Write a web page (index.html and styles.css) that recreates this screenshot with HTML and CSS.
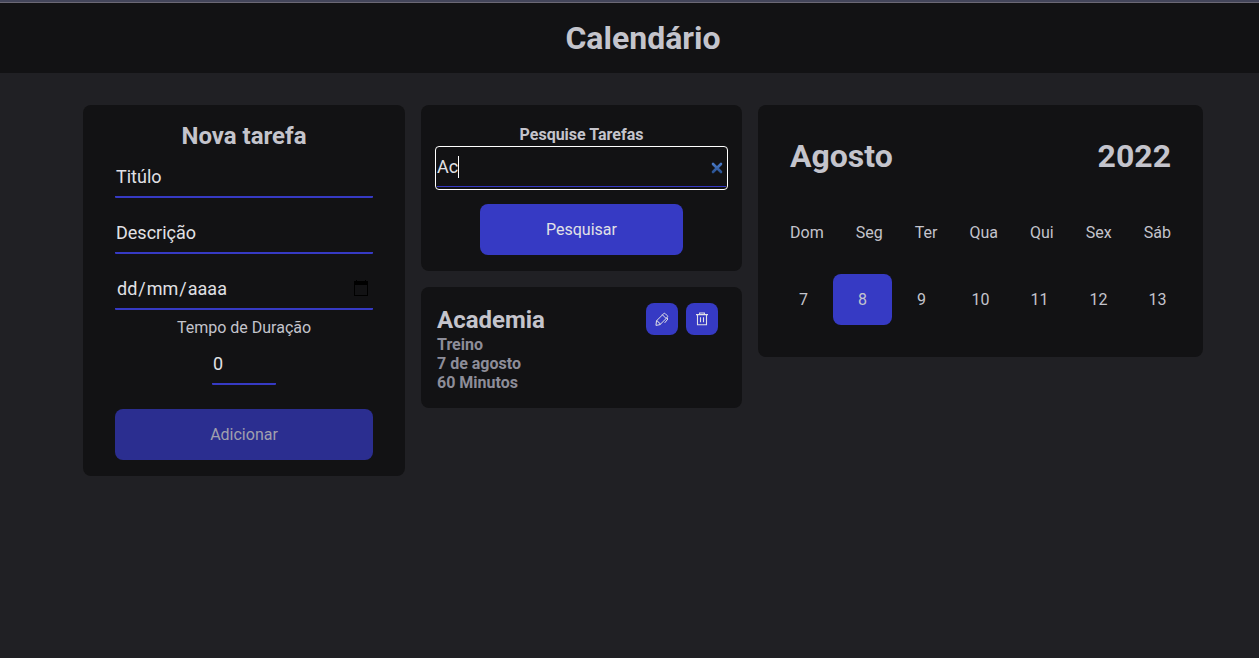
FILE: index.html
```html
<!DOCTYPE html>
<html lang="pt-BR">
<head>
<meta charset="utf-8">
<title>Calendário</title>
<link rel="stylesheet" href="styles.css">
</head>
<body>
<header class="header"><h1>Calendário</h1></header>
<main class="main">
  <section class="card new-task">
    <h2>Nova tarefa</h2>
    <div class="field">Titúlo</div>
    <div class="field">Descrição</div>
    <div class="field date"><span>dd<i>/</i>mm<i>/</i>aaaa</span>
      <svg class="cal" viewBox="0 0 14 16" width="14" height="16"><path fill="#000" fill-rule="evenodd" d="M2 0h1v1h8V0h1v1h2v15H0V1h2zM1 5v10h12V5z"/></svg>
    </div>
    <div class="label">Tempo de Duração</div>
    <div class="field number">0</div>
    <button class="btn disabled">Adicionar</button>
  </section>
  <div class="column">
    <section class="card search">
      <div class="search-label">Pesquise Tarefas</div>
      <div class="search-box">
        <div class="search-line"><span class="typed">Ac</span>
          <svg class="clear" viewBox="0 0 12 12" width="12" height="12"><defs><linearGradient id="g" gradientUnits="userSpaceOnUse" x1="0" y1="1" x2="0" y2="11"><stop offset="0" stop-color="#4a7ac8"/><stop offset="1" stop-color="#28508f"/></linearGradient></defs><path d="M2 2l8 8M10 2l-8 8" stroke="url(#g)" stroke-width="2.6" stroke-linecap="round"/></svg>
        </div>
      </div>
      <button class="btn find">Pesquisar</button>
    </section>
    <section class="card task">
      <div class="task-head">
        <h2>Academia</h2>
        <div class="actions">
          <button class="icon-btn"><svg viewBox="0 0 14 14" width="14" height="14" fill="none" stroke="#e1e1e6" stroke-width="1" stroke-linejoin="round" stroke-linecap="round"><path d="M1 13l.5-4.2L8.7 1.7q.8-.8 1.6 0l2 2q.8.8 0 1.6L5.2 12.4zM1.5 8.8q1.9-.2 1.9 1.8 2-.2 1.8 1.8M7.5 2.9l3.6 3.6M11.8 5.8l1.1 1.2-3 3.6"/></svg></button>
          <button class="icon-btn"><svg viewBox="0 0 14 14" width="14" height="14" fill="none" stroke="#e1e1e6" stroke-width="1.1"><path d="M1 2.6h12M2.5 2.6v10.1h9V2.6M4.6 2.4V1h4.8v1.4M5.5 5.2v5M8.5 5.2v5"/></svg></button>
        </div>
      </div>
      <p>Treino</p>
      <p>7 de agosto</p>
      <p>60 Minutos</p>
    </section>
  </div>
  <section class="card calendar">
    <div class="month"><h1>Agosto</h1><h1>2022</h1></div>
    <div class="weekdays"><span>Dom</span><span>Seg</span><span>Ter</span><span>Qua</span><span>Qui</span><span>Sex</span><span>Sáb</span></div>
    <div class="days"><span>7</span><span class="today">8</span><span>9</span><span>10</span><span>11</span><span>12</span><span>13</span></div>
  </section>
</main>
</body>
</html>
```
FILE: styles.css
```css
* { box-sizing: border-box; margin: 0; padding: 0; }
body {
  background: #202024;
  color: #c4c4cc;
  font: 16px/19px Roboto, sans-serif;
  height: 658px;
  overflow: hidden;
}
h1 { font-size: 32px; line-height: 38px; font-weight: 700; }
h2 { font-size: 24px; line-height: 30px; font-weight: 700; }
.header {
  height: 73px;
  padding-left: 27px;
  background: #121214;
  border-top: 2px solid #43455a;
  box-shadow: inset 0 1px #6b6875;
  display: flex;
  align-items: center;
  justify-content: center;
}
.main {
  display: grid;
  grid-template-columns: 322px 321px 445px;
  gap: 16px;
  align-items: start;
  padding: 32px 0 0 83px;
}
.card { background: #121214; border-radius: 8px; }
.column { display: grid; gap: 16px; }
.new-task { padding: 16px 32px; text-align: center; height: 371px; }
.field {
  height: 40px;
  margin-bottom: 16px;
  padding: 0 1px;
  border-bottom: 2px solid #363ac4;
  border-radius: 1px;
  color: #e1e1e6;
  font-size: 18px;
  line-height: 37px;
  text-align: left;
}
.new-task h2 { margin-bottom: 7px; }
.date {
  display: flex;
  align-items: center;
  justify-content: space-between;
  margin-bottom: 8px;
  padding: 0 5px 2px 2px;
}
.date i { font-style: normal; padding: 0 1px; }
.label { margin-bottom: 8px; }
.number { width: 64px; margin: 0 auto 24px; }
.btn {
  display: block;
  width: 100%;
  height: 51px;
  border: 0;
  border-radius: 8px;
  background: #363ac4;
  color: #e1e1e6;
  font: 16px/19px Roboto, sans-serif;
}
.disabled { background: #2b2e90; color: #a0a0ae; }
.search { height: 166px; padding: 20px 14px 16px; }
.search-label { font-weight: 700; text-align: center; margin-bottom: 2px; }
.search-box {
  height: 44px;
  padding: 1px;
  border: 1px solid #fff;
  border-radius: 4px;
  margin-bottom: 14px;
}
.search-line {
  height: 39px;
  display: flex;
  align-items: center;
  justify-content: space-between;
  padding-right: 3px;
  border-bottom: 1px solid #363ac4;
  color: #e1e1e6;
  font-size: 18px;
}
.typed { height: 22px; line-height: 21px; border-right: 1px solid #fff; }
.clear { margin-top: 1px; }
.find { width: 203px; margin: 0 auto; }
.task { height: 121px; padding: 16px 24px 16px 16px; }
.task-head { display: flex; align-items: center; justify-content: space-between; height: 32px; }
.task-head h2 { line-height: 32px; padding-top: 2px; }
.actions { display: flex; gap: 8px; }
.icon-btn {
  width: 32px;
  height: 32px;
  border: 0;
  border-radius: 8px;
  background: #363ac4;
  display: grid;
  place-items: center;
}
.task p { color: #8d8d99; font-weight: 700; }
.calendar { height: 252px; padding: 32px 16px; }
.month, .weekdays { display: flex; justify-content: space-between; padding: 0 16px; }
.month { margin-bottom: 48px; }
.weekdays { margin-bottom: 32px; }
.days { display: grid; grid-template-columns: repeat(7, 59px); text-align: center; line-height: 51px; }
.today { background: #363ac4; border-radius: 8px; }
```
